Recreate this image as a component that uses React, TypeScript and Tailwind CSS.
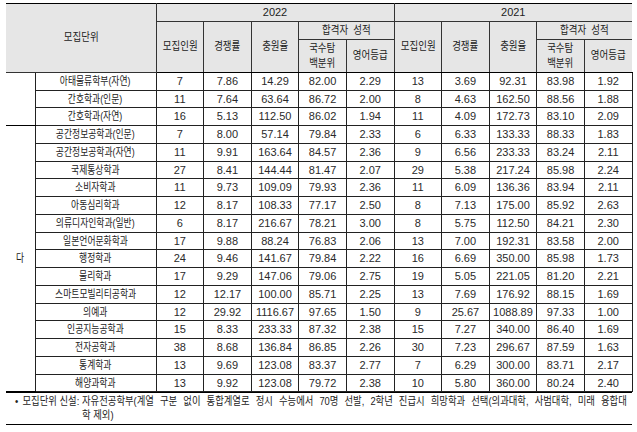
import React from 'react';

type Row = [string, ...string[]];

const group1: Row[] = [
  ['아태물류학부(자연)', '7', '7.86', '14.29', '82.00', '2.29', '13', '3.69', '92.31', '83.98', '1.92'],
  ['간호학과(인문)', '11', '7.64', '63.64', '86.72', '2.00', '8', '4.63', '162.50', '88.56', '1.88'],
  ['간호학과(자연)', '16', '5.13', '112.50', '86.02', '1.94', '11', '4.09', '172.73', '83.10', '2.09'],
];

const group2: Row[] = [
  ['공간정보공학과(인문)', '7', '8.00', '57.14', '79.84', '2.33', '6', '6.33', '133.33', '88.33', '1.83'],
  ['공간정보공학과(자연)', '11', '9.91', '163.64', '84.57', '2.36', '9', '6.56', '233.33', '83.24', '2.11'],
  ['국제통상학과', '27', '8.41', '144.44', '81.47', '2.07', '29', '5.38', '217.24', '85.98', '2.24'],
  ['소비자학과', '11', '9.73', '109.09', '79.93', '2.36', '11', '6.09', '136.36', '83.94', '2.11'],
  ['아동심리학과', '12', '8.17', '108.33', '77.17', '2.50', '8', '7.13', '175.00', '85.92', '2.63'],
  ['의류디자인학과(일반)', '6', '8.17', '216.67', '78.21', '3.00', '8', '5.75', '112.50', '84.21', '2.30'],
  ['일본언어문화학과', '17', '9.88', '88.24', '76.83', '2.06', '13', '7.00', '192.31', '83.58', '2.00'],
  ['행정학과', '24', '9.46', '141.67', '79.84', '2.22', '16', '6.69', '350.00', '85.98', '1.73'],
  ['물리학과', '17', '9.29', '147.06', '79.06', '2.75', '19', '5.05', '221.05', '81.20', '2.21'],
  ['스마트모빌리티공학과', '12', '12.17', '100.00', '85.71', '2.25', '13', '7.69', '176.92', '88.15', '1.69'],
  ['의예과', '12', '29.92', '1116.67', '97.65', '1.50', '9', '25.67', '1088.89', '97.33', '1.00'],
  ['인공지능공학과', '15', '8.33', '233.33', '87.32', '2.38', '15', '7.27', '340.00', '86.40', '1.69'],
  ['전자공학과', '38', '8.68', '136.84', '86.85', '2.26', '30', '7.23', '296.67', '87.59', '1.63'],
  ['통계학과', '13', '9.69', '123.08', '83.37', '2.77', '7', '6.29', '300.00', '83.71', '2.17'],
  ['해양과학과', '13', '9.92', '123.08', '79.72', '2.38', '10', '5.80', '360.00', '80.24', '2.40'],
];

// condensed Korean glyphs (the source uses a narrow gothic face)
function K({ children }: { children: React.ReactNode }) {
  return <span className="inline-block scale-x-[0.8] whitespace-nowrap">{children}</span>;
}

function H({ children }: { children: React.ReactNode }) {
  return <span className="inline-block scale-x-[0.86] whitespace-nowrap">{children}</span>;
}

const th = 'border border-[#333] bg-[#e6e6e6] font-normal text-center align-middle p-0';
const td = 'border border-[#222] text-center align-middle p-0';

function DataRow({ row, first, lead }: { row: Row; first?: boolean; lead?: React.ReactNode }) {
  const [name, ...vals] = row;
  return (
    <tr className="h-[17.75px]">
      {lead}
      <td className={`${td} ${first ? 'border-t-black' : ''}`}>
        <K>{name}</K>
      </td>
      {vals.map((v, i) => (
        <td key={i} className={`${td} text-[#2a2a2a] ${first ? 'border-t-black' : ''}`}>
          {v}
        </td>
      ))}
    </tr>
  );
}

export default function App() {
  return (
    <div
      className="w-[637px] h-[432px] bg-white pl-[6px] pt-[3px] text-[#222] text-[11px] leading-none"
      style={{ fontFamily: '"Liberation Sans", "Noto Sans CJK KR", sans-serif' }}
    >
      <table className="w-[626px] table-fixed border-collapse">
        <colgroup>
          <col className="w-[29px]" />
          <col className="w-[121px]" />
          {Array.from({ length: 10 }).map((_, i) => (
            <col key={i} className="w-[47.6px]" />
          ))}
        </colgroup>
        <thead>
          <tr className="h-[17.7px]">
            <th colSpan={2} rowSpan={3} className={`${th} border-l-0 border-t-black`}>
              <H>모집단위</H>
            </th>
            <th colSpan={5} className={`${th} border-t-black`}>2022</th>
            <th colSpan={5} className={`${th} border-t-black border-r-0`}>2021</th>
          </tr>
          <tr className="h-[18.3px]">
            {[0, 1].map((y) => (
              <React.Fragment key={y}>
                <th rowSpan={2} className={`${th} border-b-black`}><H>모집인원</H></th>
                <th rowSpan={2} className={`${th} border-b-black`}><H>경쟁률</H></th>
                <th rowSpan={2} className={`${th} border-b-black`}><H>충원율</H></th>
                <th colSpan={2} className={`${th} ${y ? 'border-r-0' : ''}`}><H>합격자&nbsp;&nbsp;성적</H></th>
              </React.Fragment>
            ))}
          </tr>
          <tr className="h-[33px]">
            {[0, 1].map((y) => (
              <React.Fragment key={y}>
                <th className={`${th} border-b-black leading-[15px]`}>
                  <H>국수탐</H>
                  <br />
                  <H>백분위</H>
                </th>
                <th className={`${th} border-b-black ${y ? 'border-r-0' : ''}`}><H>영어등급</H></th>
              </React.Fragment>
            ))}
          </tr>
        </thead>
        <tbody>
          {group1.map((r, i) => (
            <DataRow
              key={r[0]}
              row={r}
              lead={i === 0 ? <td rowSpan={3} className={`${td} border-l-0 border-b-black`} /> : undefined}
            />
          ))}
          {group2.map((r, i) => (
            <DataRow
              key={r[0]}
              row={r}
              first={i === 0}
              lead={
                i === 0 ? (
                  <td rowSpan={15} className={`${td} border-l-0 border-t-black border-b-black`}>
                    <K>다</K>
                  </td>
                ) : undefined
              }
            />
          ))}
        </tbody>
      </table>
      <div className="w-[626px] overflow-hidden border-t border-b border-black">
        <div className="w-[736.5px] origin-left scale-x-[0.85] flex pt-[1px] pb-[2px] leading-[14px] text-[11px]">
          <div className="w-[89.4px] pl-[10.5px] shrink-0 whitespace-nowrap">
            <span className="mr-[5px]">•</span>모집단위 신설:
          </div>
          <div className="w-[641px]">
            <div className="text-justify [text-align-last:justify]">
              자유전공학부(계열 구분 없이 통합계열로 정시 수능에서 70명 선발, 2학년 진급시 희망학과 선택(의과대학, 사범대학, 미래 융합대
            </div>
            <div>학 제외)</div>
          </div>
        </div>
      </div>
    </div>
  );
}
